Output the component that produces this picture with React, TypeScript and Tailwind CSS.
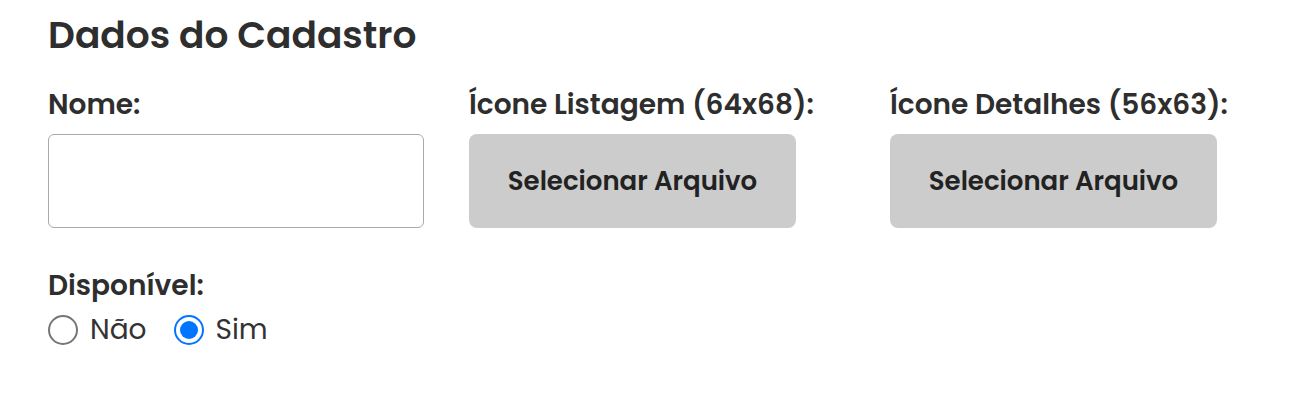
import React from "react";

function FileButton() {
  return (
    <button
      type="button"
      className="h-[94px] w-[327px] rounded-[8px] bg-[#cccccc] text-[26px] font-semibold leading-[30px] text-[#222222]"
    >
      Selecionar Arquivo
    </button>
  );
}

function Radio({ label, checked }: { label: string; checked?: boolean }) {
  return (
    <label className="flex h-[30px] items-center gap-[12px]">
      {checked ? (
        <span className="flex h-[30px] w-[30px] items-center justify-center rounded-full border-[2px] border-[#0075ff] bg-white">
          <span className="h-[18px] w-[18px] rounded-full bg-[#0075ff]" />
        </span>
      ) : (
        <span className="h-[30px] w-[30px] rounded-full border-[2px] border-[#767676] bg-white" />
      )}
      <span className="text-[28px] leading-[30px] text-[#333333]">{label}</span>
    </label>
  );
}

export default function App() {
  return (
    <div className="h-[402px] w-[1311px] bg-white pl-[48px] pt-[12px] font-['Poppins','Open_Sans',sans-serif] text-[#2e2e2e]">
      <h1 className="h-[46px] text-[37.5px] font-semibold leading-[46px]">Dados do Cadastro</h1>

      <div className="mt-[32px] grid grid-cols-[421px_421px_421px]">
        <div className="flex flex-col">
          <span className="h-[44px] text-[28px] font-semibold leading-[30px]">Nome:</span>
          <input
            type="text"
            className="h-[94px] w-[376px] rounded-[6px] border border-[#aaaaaa] bg-white px-3 outline-none"
          />
        </div>
        <div className="flex flex-col">
          <span className="h-[44px] text-[28px] font-semibold leading-[30px]">Ícone Listagem (64x68):</span>
          <FileButton />
        </div>
        <div className="flex flex-col">
          <span className="h-[44px] text-[28px] font-semibold leading-[30px]">Ícone Detalhes (56x63):</span>
          <FileButton />
        </div>
      </div>

      <div className="mt-[43px] flex flex-col">
        <span className="h-[44px] text-[28px] font-semibold leading-[30px]">Disponível:</span>
        <div className="flex items-center gap-[27px]">
          <Radio label="Não" />
          <Radio label="Sim" checked />
        </div>
      </div>
    </div>
  );
}
